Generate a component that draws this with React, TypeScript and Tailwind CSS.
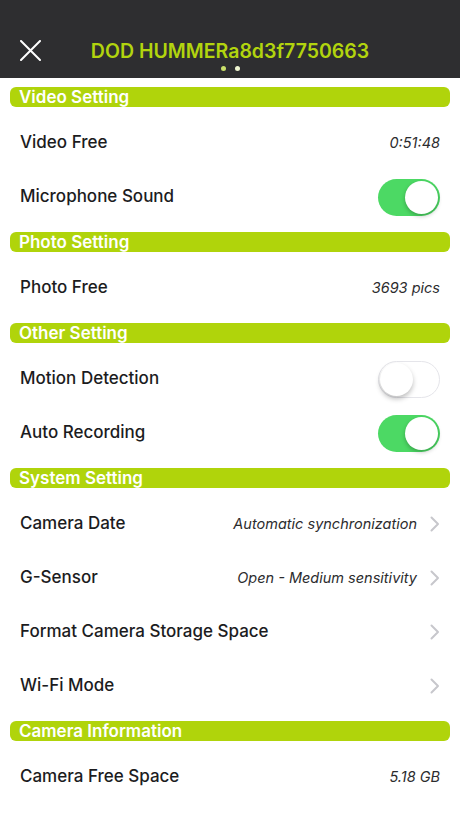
type Row = {
  label: string;
  value?: string;
  toggle?: boolean;
  chevron?: boolean;
};

type Section = { title: string; rows: Row[] };

const sections: Section[] = [
  {
    title: 'Video Setting',
    rows: [
      { label: 'Video Free', value: '0:51:48' },
      { label: 'Microphone Sound', toggle: true },
    ],
  },
  {
    title: 'Photo Setting',
    rows: [{ label: 'Photo Free', value: '3693 pics' }],
  },
  {
    title: 'Other Setting',
    rows: [
      { label: 'Motion Detection', toggle: false },
      { label: 'Auto Recording', toggle: true },
    ],
  },
  {
    title: 'System Setting',
    rows: [
      { label: 'Camera Date', value: 'Automatic synchronization', chevron: true },
      { label: 'G-Sensor', value: 'Open - Medium sensitivity', chevron: true },
      { label: 'Format Camera Storage Space', chevron: true },
      { label: 'Wi-Fi Mode', chevron: true },
    ],
  },
  {
    title: 'Camera Information',
    rows: [{ label: 'Camera Free Space', value: '5.18 GB' }],
  },
];

function Switch({ on }: { on: boolean }) {
  return (
    <div
      className={
        on
          ? 'relative w-[62px] h-[37px] rounded-full bg-[#4cd964]'
          : 'relative w-[62px] h-[37px] rounded-full bg-white border-[1.5px] border-[#e5e5ea]'
      }
    >
      <div
        className={
          on
            ? 'absolute right-[2px] top-[2px] w-[33px] h-[33px] rounded-full bg-white shadow-[0_2px_4px_rgba(0,0,0,0.25)]'
            : 'absolute left-[1px] top-[1px] w-[33px] h-[33px] rounded-full bg-white shadow-[0_3px_5px_rgba(0,0,0,0.25)]'
        }
      />
    </div>
  );
}

function Chevron() {
  return (
    <svg
      className="ml-[13px]"
      width="10"
      height="16"
      viewBox="0 0 10 16"
      fill="none"
      stroke="#c7c7cc"
      strokeWidth="2"
      strokeLinecap="round"
      strokeLinejoin="round"
    >
      <path d="M1.5 1.5 L8 8 L1.5 14.5" />
    </svg>
  );
}

export default function App() {
  return (
    <div className="w-[460px] h-[818px] bg-white overflow-hidden font-['Inter','Liberation_Sans',sans-serif]">
      {/* Nav bar */}
      <div className="relative h-[78px] bg-[#2e2e30]">
        <svg
          className="absolute left-[20px] top-[40px]"
          width="21"
          height="21"
          viewBox="0 0 21 21"
          fill="none"
          stroke="white"
          strokeWidth="2"
          strokeLinecap="round"
        >
          <path d="M1 1 L20 20 M20 1 L1 20" />
        </svg>
        <div className="absolute inset-x-0 top-[38px] text-center text-[19.5px] font-semibold text-[#b2d40e] leading-[26px]">
          DOD HUMMERa8d3f7750663
        </div>
        <div className="absolute top-[66px] left-0 right-0 flex justify-center gap-[9px]">
          <span className="w-[5px] h-[5px] rounded-full bg-[#c9df6a]" />
          <span className="w-[5px] h-[5px] rounded-full bg-[#eef5d0]" />
        </div>
      </div>

      {/* Settings */}
      <div className="pt-px">
        {sections.map((s) => (
          <div key={s.title} className="pt-2">
            <div className="mx-[10px] h-[20px] rounded-[6px] bg-[#b0d40b] px-[9px] flex items-center text-white text-[17px] font-semibold leading-none">
              {s.title}
            </div>
            <div className="pt-[9px]">
              {s.rows.map((r) => (
                <div key={r.label} className="h-[54px] flex items-center pl-[20px] pr-[20px]">
                  <span className="flex-1 text-[17px] font-medium text-[#1c1c1e]">{r.label}</span>
                  {r.value && (
                    <span className="text-[14.5px] italic text-[#2c2c2e]">{r.value}</span>
                  )}
                  {r.chevron && <Chevron />}
                  {r.toggle !== undefined && <Switch on={r.toggle} />}
                </div>
              ))}
            </div>
          </div>
        ))}
      </div>
    </div>
  );
}
